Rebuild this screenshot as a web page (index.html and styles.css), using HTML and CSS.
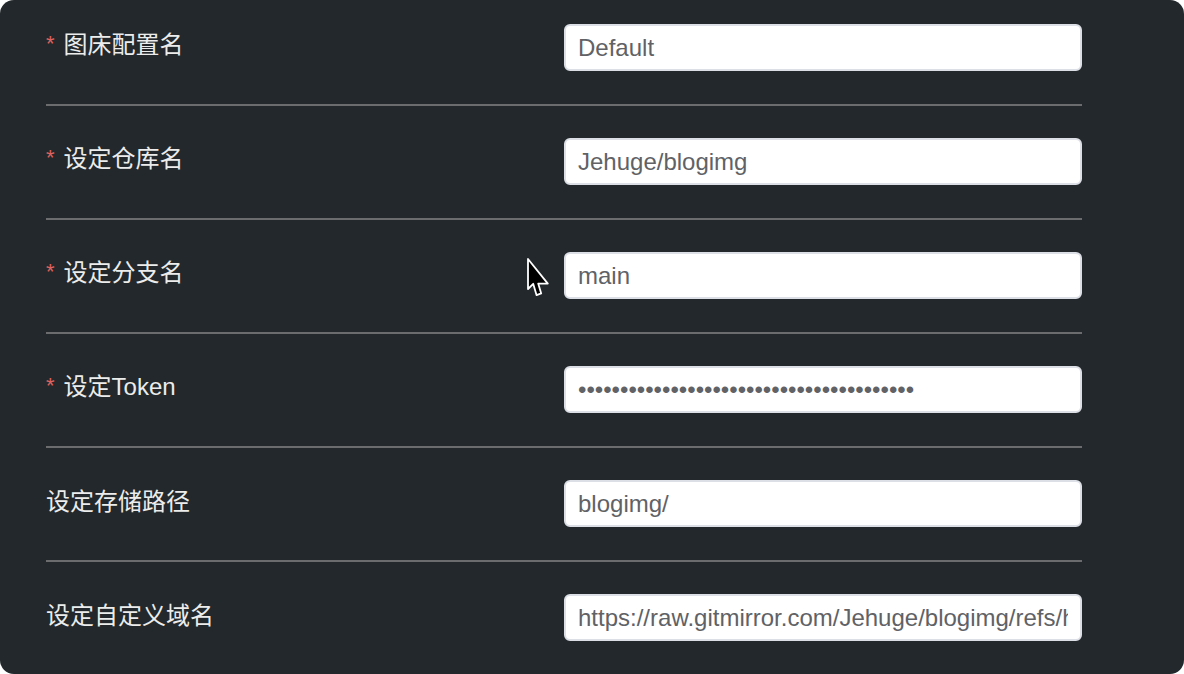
FILE: index.html
```html
<!DOCTYPE html>
<html lang="zh-CN">
<head>
<meta charset="utf-8">
<title>图床配置</title>
<link rel="stylesheet" href="styles.css">
</head>
<body>
<div class="panel">
  <form class="form">
    <div class="row">
      <label class="label required">图床配置名</label>
      <input class="input" type="text" value="Default">
    </div>
    <div class="divider"></div>
    <div class="row">
      <label class="label required">设定仓库名</label>
      <input class="input" type="text" value="Jehuge/blogimg">
    </div>
    <div class="divider"></div>
    <div class="row">
      <label class="label required">设定分支名</label>
      <input class="input" type="text" value="main">
    </div>
    <div class="divider"></div>
    <div class="row">
      <label class="label required">设定Token</label>
      <input class="input" type="password" value="ghp_abcdefghijklmnopqrstuvwxyz0123456789">
    </div>
    <div class="divider"></div>
    <div class="row">
      <label class="label">设定存储路径</label>
      <input class="input" type="text" value="blogimg/">
    </div>
    <div class="divider"></div>
    <div class="row">
      <label class="label">设定自定义域名</label>
      <input class="input" type="text" value="https://raw.gitmirror.com/Jehuge/blogimg/refs/heads/main/">
    </div>
  </form>
  <svg class="cursor" width="26" height="42" viewBox="0 0 26 42" aria-hidden="true">
    <path d="M2 2 L2 32 L7.2 26.8 L10.6 38.2 L15.2 36.4 L12.2 26.6 L21.8 26.6 Z" fill="#000" stroke="#fff" stroke-width="1.8" stroke-linejoin="round"/>
  </svg>
</div>
</body>
</html>
```

FILE: styles.css
```css
html, body {
  margin: 0;
  padding: 0;
  background: #ffffff;
}

.panel {
  position: relative;
  width: 1184px;
  height: 674px;
  background: #22282b;
  border-radius: 14px;
  overflow: hidden;
  box-sizing: border-box;
  padding: 24px 102px 0 46px;
}

.form {
  display: flex;
  flex-direction: column;
}

.row {
  display: grid;
  grid-template-columns: 1fr 1fr;
  align-items: center;
  height: 47px;
}

.divider {
  height: 2px;
  background: #6a6c6d;
  margin: 33px 0 32px;
}

.label {
  font-family: "Liberation Sans", "Noto Sans CJK SC", sans-serif;
  font-size: 24px;
  line-height: 30px;
  color: #ececec;
  margin-top: -4px;
}

.label.required::before {
  content: "*";
  color: #e0625f;
  font-size: 22px;
  margin-right: 9px;
  position: relative;
  top: -2px;
}

.input {
  box-sizing: border-box;
  width: 100%;
  height: 47px;
  margin: 0;
  border: 2px solid #dcdfe6;
  border-radius: 6px;
  background: #ffffff;
  padding: 0 12px;
  font-family: "Liberation Sans", sans-serif;
  font-size: 24px;
  color: #606266;
  outline: none;
}

.cursor {
  position: absolute;
  left: 526px;
  top: 257px;
}
```
